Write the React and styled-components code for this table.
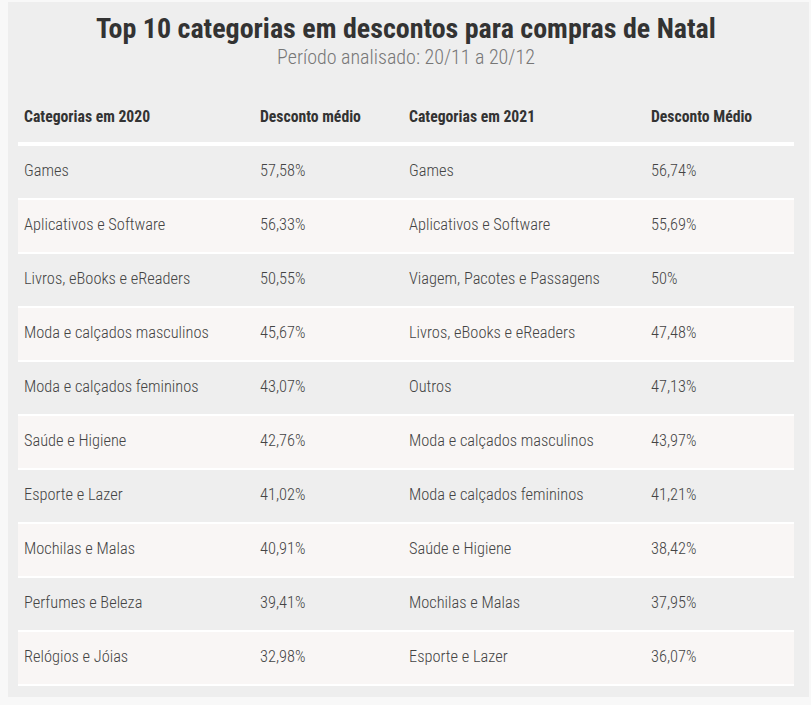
import React from 'react'
import styled, { createGlobalStyle } from 'styled-components'

const GlobalStyle = createGlobalStyle`
  html, body {
    margin: 0;
    padding: 0;
    background: #f8f8f8;
  }
  body {
    font-family: 'Roboto Condensed', 'Liberation Sans Narrow', 'DejaVu Sans Condensed', Roboto, sans-serif;
  }
`

const Panel = styled.div`
  margin: 2px 0 0 8px;
  width: 801px;
  height: 695px;
  box-sizing: border-box;
  padding: 0 15px 0 10px;
  background: #eeeeee;
`

const Heading = styled.header`
  height: 88px;
  text-align: center;
  padding-top: 10px;
  box-sizing: border-box;
`

const Title = styled.h1`
  margin: 0;
  font-size: 28px;
  line-height: 34px;
  font-weight: 700;
  color: #333333;
`

const Subtitle = styled.p`
  margin: 0;
  font-size: 20px;
  line-height: 22px;
  font-weight: 300;
  color: #777777;
`

const Table = styled.table`
  width: 776px;
  border-collapse: collapse;
  table-layout: fixed;
`

const HeadCell = styled.th`
  height: 52px;
  padding: 0 6px;
  text-align: left;
  font-size: 15.7px;
  font-weight: 700;
  color: #333333;
  border-bottom: 4px solid #ffffff;
`

const Row = styled.tr`
  background: ${({ $even }) => ($even ? '#f9f6f5' : 'transparent')};
`

const Cell = styled.td`
  height: 48px;
  padding: 0 6px 4px;
  font-size: 16.4px;
  font-weight: 300;
  color: #444444;
  border-bottom: 2px solid #ffffff;
`

const rows = [
  ['Games', '57,58%', 'Games', '56,74%'],
  ['Aplicativos e Software', '56,33%', 'Aplicativos e Software', '55,69%'],
  ['Livros, eBooks e eReaders', '50,55%', 'Viagem, Pacotes e Passagens', '50%'],
  ['Moda e calçados masculinos', '45,67%', 'Livros, eBooks e eReaders', '47,48%'],
  ['Moda e calçados femininos', '43,07%', 'Outros', '47,13%'],
  ['Saúde e Higiene', '42,76%', 'Moda e calçados masculinos', '43,97%'],
  ['Esporte e Lazer', '41,02%', 'Moda e calçados femininos', '41,21%'],
  ['Mochilas e Malas', '40,91%', 'Saúde e Higiene', '38,42%'],
  ['Perfumes e Beleza', '39,41%', 'Mochilas e Malas', '37,95%'],
  ['Relógios e Jóias', '32,98%', 'Esporte e Lazer', '36,07%'],
]

export default function App() {
  return (
    <>
      <GlobalStyle />
      <Panel>
        <Heading>
          <Title>Top 10 categorias em descontos para compras de Natal</Title>
          <Subtitle>Período analisado: 20/11 a 20/12</Subtitle>
        </Heading>
        <Table>
          <colgroup>
            <col style={{ width: 236 }} />
            <col style={{ width: 149 }} />
            <col style={{ width: 242 }} />
            <col style={{ width: 149 }} />
          </colgroup>
          <thead>
            <tr>
              <HeadCell>Categorias em 2020</HeadCell>
              <HeadCell>Desconto médio</HeadCell>
              <HeadCell>Categorias em 2021</HeadCell>
              <HeadCell>Desconto Médio</HeadCell>
            </tr>
          </thead>
          <tbody>
            {rows.map((r, i) => (
              <Row key={i} $even={i % 2 === 1}>
                {r.map((c, j) => (
                  <Cell key={j}>{c}</Cell>
                ))}
              </Row>
            ))}
          </tbody>
        </Table>
      </Panel>
    </>
  )
}
